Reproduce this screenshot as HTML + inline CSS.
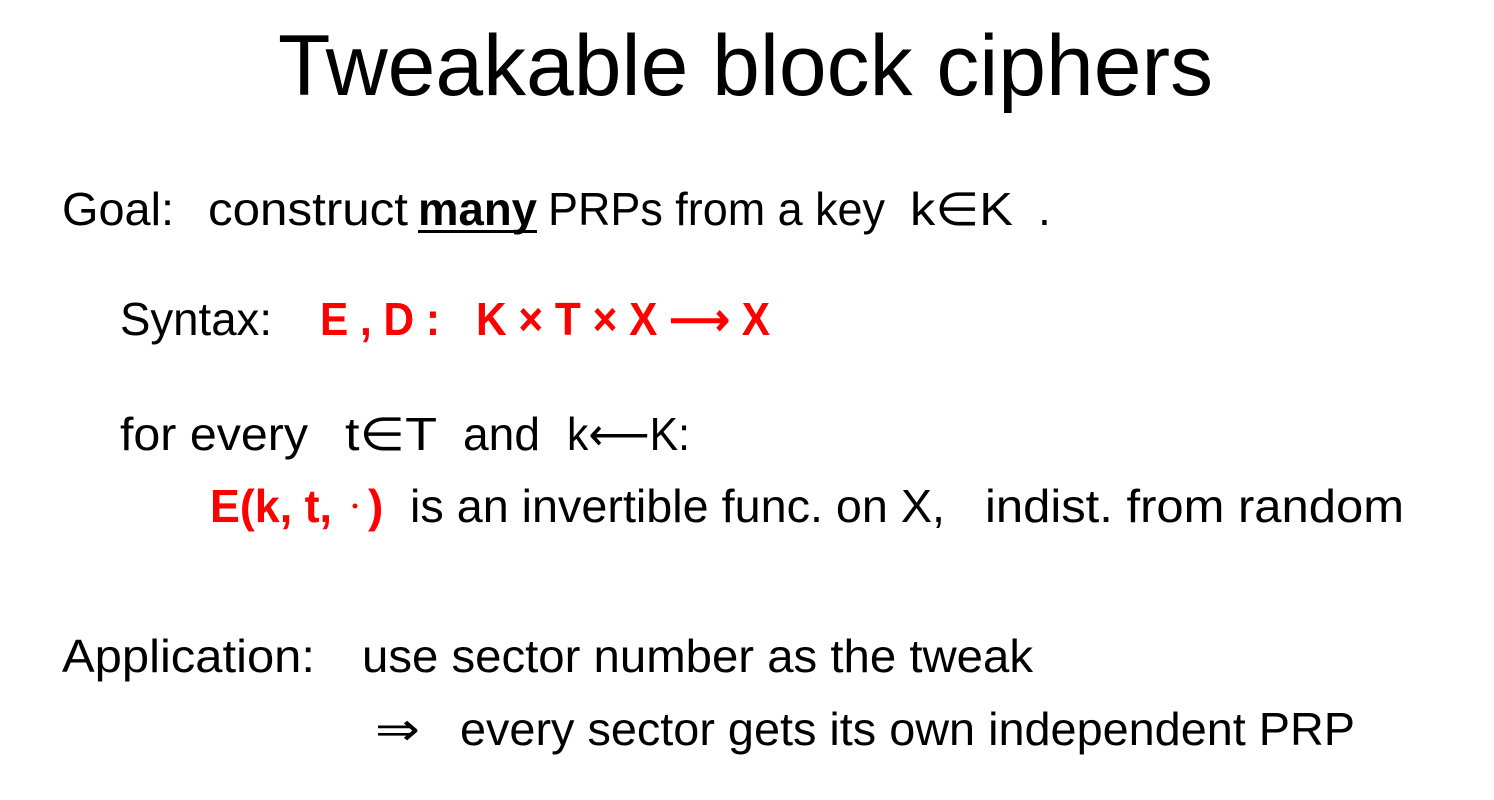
<!DOCTYPE html>
<html><head><meta charset="utf-8"><style>
html,body{margin:0;padding:0;background:#fff;width:1494px;height:800px;overflow:hidden}
svg{display:block}
text{font-family:"Liberation Sans",sans-serif;fill:#000}
.r{fill:#ff0000;font-weight:bold}
</style></head><body>
<svg width="1494" height="800" xmlns="http://www.w3.org/2000/svg">
<text x="278" y="95" font-size="86" textLength="935" lengthAdjust="spacingAndGlyphs">Tweakable block ciphers</text>

<g font-size="46">
<text x="62" y="225" textLength="112" lengthAdjust="spacingAndGlyphs">Goal:</text>
<text x="208" y="225" textLength="200" lengthAdjust="spacingAndGlyphs">construct</text>
<text x="418" y="225" font-weight="bold" textLength="119" lengthAdjust="spacingAndGlyphs">many</text>
<rect x="418" y="230" width="119" height="3" fill="#000"/>
<text x="548" y="225" textLength="337" lengthAdjust="spacingAndGlyphs">PRPs from a key</text>
<text x="910" y="225" textLength="103" lengthAdjust="spacingAndGlyphs">k∈K</text>
<text x="1038" y="225">.</text>

<text x="120" y="335" textLength="152" lengthAdjust="spacingAndGlyphs">Syntax:</text>
<text x="320" y="335" class="r" textLength="120" lengthAdjust="spacingAndGlyphs">E , D :</text>
<text x="476" y="335" class="r" textLength="294" lengthAdjust="spacingAndGlyphs">K × T × X ⟶ X</text>

<text x="120" y="450" textLength="188" lengthAdjust="spacingAndGlyphs">for every</text>
<text x="345" y="450" textLength="92" lengthAdjust="spacingAndGlyphs">t∈T</text>
<text x="463" y="450" textLength="77" lengthAdjust="spacingAndGlyphs">and</text>
<text x="567" y="450" textLength="123" lengthAdjust="spacingAndGlyphs">k⟵K:</text>

<text x="210" y="522" class="r" textLength="122" lengthAdjust="spacingAndGlyphs">E(k, t,</text>
<circle cx="355" cy="506" r="2.5" fill="#ff0000"/>
<text x="368" y="522" class="r">)</text>
<text x="410" y="522" textLength="535" lengthAdjust="spacingAndGlyphs">is an invertible func. on X,</text>
<text x="985" y="522" textLength="419" lengthAdjust="spacingAndGlyphs">indist. from random</text>

<text x="62" y="672" textLength="253" lengthAdjust="spacingAndGlyphs">Application:</text>
<text x="362" y="672" textLength="671" lengthAdjust="spacingAndGlyphs">use sector number as the tweak</text>

<text x="375" y="745" textLength="45" lengthAdjust="spacingAndGlyphs">⇒</text>
<text x="460" y="745" textLength="895" lengthAdjust="spacingAndGlyphs">every sector gets its own independent PRP</text>
</g>
</svg>
</body></html>
